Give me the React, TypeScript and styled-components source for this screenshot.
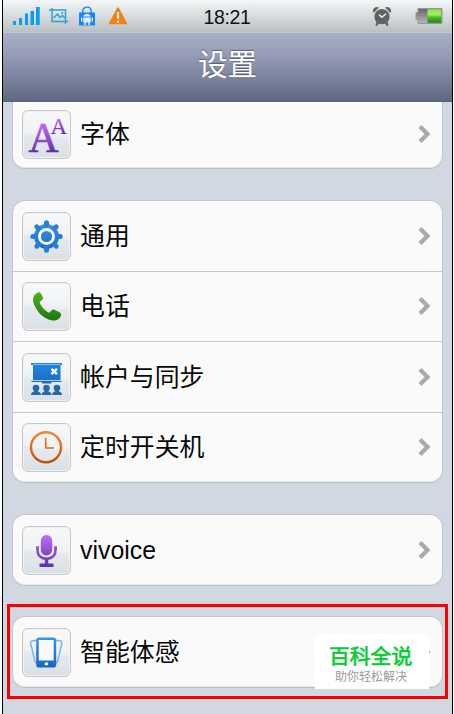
import React from 'react';
import styled, { createGlobalStyle } from 'styled-components';

const GlobalStyle = createGlobalStyle`
  * {
    box-sizing: border-box;
  }

  body {
    margin: 0;
    background: #fff;
    font-family: 'Liberation Sans', 'Noto Sans CJK SC', sans-serif;
  }
`;

const Screen = styled.div`
  position: relative;
  width: 451px;
  height: 714px;
  margin-left: 2px;
  border: solid #000;
  border-width: 0 1px;
  background: #d2d8e2;
  overflow: hidden;
`;

const StatusBar = styled.header`
  display: grid;
  grid-template-columns: 1fr auto 1fr;
  align-items: center;
  height: 33px;
  padding: 0 9px 3px 10px;
  background: linear-gradient(#f4f6f7, #d5d9db 55%, #b9c0c3);
  border-bottom: 1px solid #bdc8d6;
`;

const StatusIcons = styled.div<{ $end?: boolean }>`
  display: flex;
  align-items: center;
  justify-content: ${props => props.$end ? 'flex-end' : 'flex-start'};
  gap: ${props => props.$end ? '23px' : '9px'};
  height: 30px;

  svg {
    display: block;
  }
`;

const Clock = styled.span`
  padding: 2px 2px 0 0;
  font-size: 19.5px;
  line-height: 30px;
  letter-spacing: -0.4px;
  color: #111;
`;

const TitleBar = styled.div`
  display: flex;
  align-items: center;
  justify-content: center;
  height: 69px;
  padding-bottom: 5px;
  background: linear-gradient(#a8b0c8, #9298b3 38%, #5f6881);
  border-bottom: 1px solid #5b627b;
`;

const Title = styled.h1`
  margin: 0;
  font-size: 29.5px;
  line-height: 40px;
  font-weight: 400;
  color: #fff;
  text-shadow: 0 -1px 1px rgba(50, 55, 80, 0.6);
`;

const Settings = styled.main`
  display: flex;
  flex-direction: column;
  gap: 31px;
  padding: 0 9px;
`;

const Group = styled.section<{ $height: number; $cut?: boolean }>`
  display: flex;
  flex-direction: column;
  height: ${props => props.$height}px;
  background: #fafafa;
  border: 1px solid #c3c5cb;
  border-bottom-color: #bdbfc4;
  border-top-width: ${props => props.$cut ? 0 : 1}px;
  border-radius: ${props => props.$cut ? '0 0 13px 13px' : '13px'};
  box-shadow: inset 0 -1px 0 #e8e8e9;
`;

const Row = styled.div`
  display: flex;
  flex: 1;
  align-items: center;
  min-height: 0;
  padding: 0 10px 0 9px;

  &:not(:last-child) {
    border-bottom: 1px solid #c9c9cb;
  }
`;

const CutRow = styled(Row)`
  padding-bottom: 2px;
`;

const IconTile = styled.div`
  display: flex;
  flex: none;
  width: 49px;
  height: 49px;
  margin-top: 1px;
  border: 1px solid #c8c8cb;
  border-radius: 6px;
  background:
    radial-gradient(ellipse 62px 27px at 75% 0, rgba(255, 255, 255, 0.35) 0 92%, transparent),
    linear-gradient(#f3f5f6, #d9e0e5);
  box-shadow: inset 0 0 0 1px #f0f2f4;

  svg {
    display: block;
    width: 47px;
    height: 47px;
    overflow: visible;
  }
`;

const Label = styled.span`
  flex: 1;
  margin-left: 9px;
  font-size: 24.9px;
  line-height: 36px;
  color: #080808;
  white-space: nowrap;
`;

const Arrow = styled.svg`
  display: block;
  width: 14px;
  height: 20px;
`;

const Highlight = styled.div`
  position: absolute;
  left: 4px;
  top: 604px;
  width: 441px;
  height: 95px;
  border: 3px solid #f00;
`;

const Watermark = styled.div`
  position: absolute;
  left: 312px;
  top: 634px;
  width: 114px;
  height: 55px;
  padding: 9px 0 0 14px;
  background: #fff;
`;

const WatermarkName = styled.div`
  font-size: 20.8px;
  line-height: 28px;
  font-weight: 400;
  color: #0bcb36;
  -webkit-text-stroke: 0.7px #0bcb36;
  white-space: nowrap;
`;

const WatermarkSlogan = styled.div`
  padding-left: 6px;
  font-size: 12px;
  line-height: 12px;
  color: #999;
  white-space: nowrap;
`;

const Chevron = () => (
  <Arrow viewBox="0 0 14 20">
    <path d="M2 2.5L9.5 10L2 17.5" fill="none" stroke="#aaa" strokeWidth="4.2" />
  </Arrow>
);

const FontIcon = () => (
  <svg viewBox="0 0 47 47">
    <defs>
      <linearGradient id="fontFill" x1="0" y1="0" x2="0" y2="1">
        <stop offset="0.25" stopColor="#bd62f5" />
        <stop offset="0.8" stopColor="#5f2fac" />
      </linearGradient>
    </defs>
    <g fill="url(#fontFill)" stroke="url(#fontFill)" fontFamily="Liberation Serif, serif">
      <text x="5.5" y="41" fontSize="41.5" strokeWidth="0.7">A</text>
      <text x="27.5" y="22.5" fontSize="23" strokeWidth="0.2">A</text>
    </g>
  </svg>
);

const GearIcon = () => (
  <svg viewBox="0 0 47 47">
    <defs>
      <linearGradient id="gearFill" gradientUnits="userSpaceOnUse" x1="0" y1="7" x2="0" y2="40">
        <stop stopColor="#3b9bf0" />
        <stop offset="1" stopColor="#1765bd" />
      </linearGradient>
    </defs>
    <circle cx="23.5" cy="23.5" r="9" fill="#f8fafb" />
    <circle cx="23.5" cy="23.5" r="10.5" fill="none" stroke="url(#gearFill)" strokeWidth="4" />
    <circle cx="23.5" cy="23.5" r="5.6" fill="url(#gearFill)" />
    <path
      d="M23.5 12V9.8M23.5 35V37.2M12 23.5H9.8M35 23.5H37.2M15.4 15.4L13.8 13.8M31.6 15.4L33.2 13.8M15.4 31.6L13.8 33.2M31.6 31.6L33.2 33.2"
      fill="none"
      stroke="#2780d8"
      strokeWidth="5"
      strokeLinecap="round"
    />
  </svg>
);

const PhoneIcon = () => (
  <svg viewBox="0 0 47 47">
    <defs>
      <linearGradient id="phoneFill" x1="0" y1="0" x2="0" y2="1">
        <stop stopColor="#50b41b" />
        <stop offset="1" stopColor="#1d7610" />
      </linearGradient>
    </defs>
    <path
      d="M15 9.5C11.5 11 9.5 14 10.2 18.5C12 27 20 36 29 37.5C33.5 38 37 36 38 32.5C38.4 31 37.8 30 36.5 29.2L31.5 26.8C30.3 26.3 29.2 26.6 28.4 27.6L26.4 29.8C22 28 18 23.5 16.5 19L19 17C20 16.2 20.3 15.2 19.8 14L17.8 10.3C17.2 9.3 16.2 9 15 9.5Z"
      fill="url(#phoneFill)"
    />
  </svg>
);

const SyncIcon = () => (
  <svg viewBox="0 0 47 47">
    <defs>
      <linearGradient id="boardFill" x1="0" y1="0" x2="0" y2="1">
        <stop stopColor="#2288e4" />
        <stop offset="1" stopColor="#1b69bf" />
      </linearGradient>
    </defs>
    <path d="M8 9H39V10H8ZM8 9H10V11H8ZM37 9H39V11H37ZM10 10.6H37.5V26H10ZM8.5 26.7H38.5V28H8.5ZM19 28H28.5V29.5H19Z" fill="url(#boardFill)" />
    <path d="M28.5 14.8L34 20.2M34 14.8L28.5 20.2" stroke="#fff" strokeWidth="2.4" />
    {[13, 23.5, 34].map(x => (
      <g key={x} fill="#2468ae">
        <circle cx={x} cy="34" r="3.3" />
        <path d={`M${x - 2} 35V37.5C${x - 4} 38 ${x - 5} 39 ${x - 5} 41H${x + 5}C${x + 5} 39 ${x + 4} 38 ${x + 2} 37.5V35Z`} />
      </g>
    ))}
  </svg>
);

const ClockIcon = () => (
  <svg viewBox="0 0 47 47">
    <defs>
      <linearGradient id="clockFill" gradientUnits="userSpaceOnUse" x1="0" y1="7" x2="0" y2="40">
        <stop stopColor="#f58a24" />
        <stop offset="1" stopColor="#bd4d09" />
      </linearGradient>
    </defs>
    <circle cx="23" cy="23.3" r="15" fill="none" stroke="url(#clockFill)" strokeWidth="2.4" />
    <path d="M22.7 13.5V24H31" fill="none" stroke="url(#clockFill)" strokeWidth="1.7" />
  </svg>
);

const MicIcon = () => (
  <svg viewBox="0 0 47 47">
    <defs>
      <linearGradient id="micFill" gradientUnits="userSpaceOnUse" x1="0" y1="8" x2="0" y2="40">
        <stop stopColor="#be6ef8" />
        <stop offset="1" stopColor="#6030ad" />
      </linearGradient>
    </defs>
    <rect x="17.8" y="8" width="11.4" height="20.5" rx="5.7" fill="url(#micFill)" />
    <path d="M14.6 21V24C14.6 34.2 32.4 34.2 32.4 24V21" fill="none" stroke="url(#micFill)" strokeWidth="2.5" />
    <path d="M13 19.3H16V23H13ZM31 19.3H34V23H31ZM21.8 31.5H25.2V36.5H30.5V40H16.5V36.5H21.8Z" fill="url(#micFill)" />
  </svg>
);

const MotionIcon = () => (
  <svg viewBox="0 0 47 47">
    <defs>
      <linearGradient id="motionFill" x1="0" y1="0" x2="0" y2="1">
        <stop stopColor="#3494ec" />
        <stop offset="1" stopColor="#1964bd" />
      </linearGradient>
    </defs>
    <g fill="none" stroke="#7fb5e6" strokeWidth="1.5">
      <path d="M14 11.2L9 12Q7.3 12.4 7.6 14L12 32.8Q12.4 34.2 14.2 34" />
      <path d="M32.5 11.2L37.5 12Q39.2 12.4 38.9 14L34.5 32.8Q34.1 34.2 32.3 34" />
    </g>
    <rect x="13.2" y="8.6" width="20" height="30" rx="3.2" fill="url(#motionFill)" />
    <rect x="15.7" y="11" width="15" height="20.5" fill="#f7f9fa" />
    <rect x="21.7" y="33.5" width="3.4" height="2.7" rx="0.6" fill="#fff" />
  </svg>
);

interface SettingItem {
  label: string;
  icon: React.ReactNode;
}

const generalItems: SettingItem[] = [
  { label: '通用', icon: <GearIcon /> },
  { label: '电话', icon: <PhoneIcon /> },
  { label: '帐户与同步', icon: <SyncIcon /> },
  { label: '定时开关机', icon: <ClockIcon /> },
];

const RowContent: React.FC<SettingItem> = ({ label, icon }) => (
  <>
    <IconTile>{icon}</IconTile>
    <Label>{label}</Label>
    <Chevron />
  </>
);

const LastGroup = styled(Group)`
  margin-top: -1px;
`;

const App: React.FC = () => {
  return (
    <>
      <GlobalStyle />
      <Screen>
        <StatusBar>
          <StatusIcons>
            {/* signal */}
            <svg width="27" height="20" viewBox="0 0 27 20">
              <path d="M0 15H3V19H0ZM6 12H9V19H6ZM12 7.5H15V19H12ZM17.5 5H21V19H17.5ZM23 1H26.7V19H23Z" fill="#08a0ee" />
            </svg>
            {/* screenshot */}
            <svg width="20" height="18" viewBox="0 0 20 18">
              <g fill="none" stroke="#29a3dc" strokeWidth="1.5">
                <path d="M0 3H16.5V17M3 1V14.5H19" />
                <path d="M4.5 11L8.5 7L11 10.5L13.5 8.5L15.8 11" />
              </g>
              <circle cx="13.2" cy="6" r="1.1" fill="#29a3dc" />
            </svg>
            {/* app market */}
            <svg width="18" height="20" viewBox="0 0 18 20">
              <path d="M4.8 8V5.2C4.8 -0.2 13.2 -0.2 13.2 5.2V8" fill="none" stroke="#1687f5" strokeWidth="1.4" />
              <path d="M1 6.5H17V19.5H1Z" fill="#1687f5" />
              <path d="M5.2 10.5C6 7.3 12 7.3 12.8 10.5ZM5.2 11.5H12.8V16.5H11.8V19H10.2V16.5H7.8V19H6.2V16.5H5.2ZM3 11.5H4.3V15.5H3ZM13.7 11.5H15V15.5H13.7Z" fill="#dfedf8" />
            </svg>
            {/* warning */}
            <svg width="22" height="18" viewBox="0 0 22 18">
              <path d="M12.2 0.8Q13 -0.5 13.8 0.8L22 16Q22.6 17.3 21.3 17.3H4.7Q3.4 17.3 4 16Z" fill="#f2820f" />
              <path d="M13 5V11.7M13 13.5V15.7" stroke="#f4eee7" strokeWidth="2.2" />
            </svg>
          </StatusIcons>
          <Clock>18:21</Clock>
          <StatusIcons $end>
            {/* alarm */}
            <svg width="20" height="20" viewBox="0 0 20 20">
              <g fill="#626262">
                <circle cx="10" cy="10.7" r="7.6" />
                <path d="M1 6.5C0 2.5 4 -0.3 7 1.6L2 6.6ZM19 6.5C20 2.5 16 -0.3 13 1.6L18 6.6ZM4.5 15L7 17L5.5 19.8H3.5ZM15.5 15L13 17L14.5 19.8H16.5Z" />
              </g>
              <path d="M7 8.5L9.8 11.3L14 7.7" fill="none" stroke="#eceeee" strokeWidth="1.5" />
            </svg>
            {/* battery */}
            <svg width="28" height="16" viewBox="0 0 28 16">
              <defs>
                <linearGradient id="batteryEmpty" x1="0" y1="0" x2="0" y2="1">
                  <stop stopColor="#656565" />
                  <stop offset="1" stopColor="#b8b8b8" />
                </linearGradient>
                <linearGradient id="batteryFull" x1="0" y1="0" x2="0" y2="1">
                  <stop stopColor="#8fe052" />
                  <stop offset="0.4" stopColor="#a0ef61" />
                  <stop offset="0.6" stopColor="#48bd20" />
                  <stop offset="1" stopColor="#2c8511" />
                </linearGradient>
              </defs>
              <path d="M3 0.5H27V15.5H3V11.5H1V4.5H3Z" fill="url(#batteryEmpty)" stroke="#929895" />
              <rect x="12.5" y="1.2" width="13.8" height="13.6" fill="url(#batteryFull)" />
            </svg>
          </StatusIcons>
        </StatusBar>
        <TitleBar>
          <Title>设置</Title>
        </TitleBar>
        <Settings>
          <Group $height={67} $cut>
            <CutRow>
              <RowContent label="字体" icon={<FontIcon />} />
            </CutRow>
          </Group>
          <Group $height={283}>
            {generalItems.map(item => (
              <Row key={item.label}>
                <RowContent {...item} />
              </Row>
            ))}
          </Group>
          <Group $height={72}>
            <Row>
              <RowContent label="vivoice" icon={<MicIcon />} />
            </Row>
          </Group>
          <LastGroup $height={72}>
            <Row>
              <RowContent label="智能体感" icon={<MotionIcon />} />
            </Row>
          </LastGroup>
        </Settings>
        <Highlight />
        <Watermark>
          <WatermarkName>百科全说</WatermarkName>
          <WatermarkSlogan>助你轻松解决</WatermarkSlogan>
        </Watermark>
      </Screen>
    </>
  );
};

export default App;
